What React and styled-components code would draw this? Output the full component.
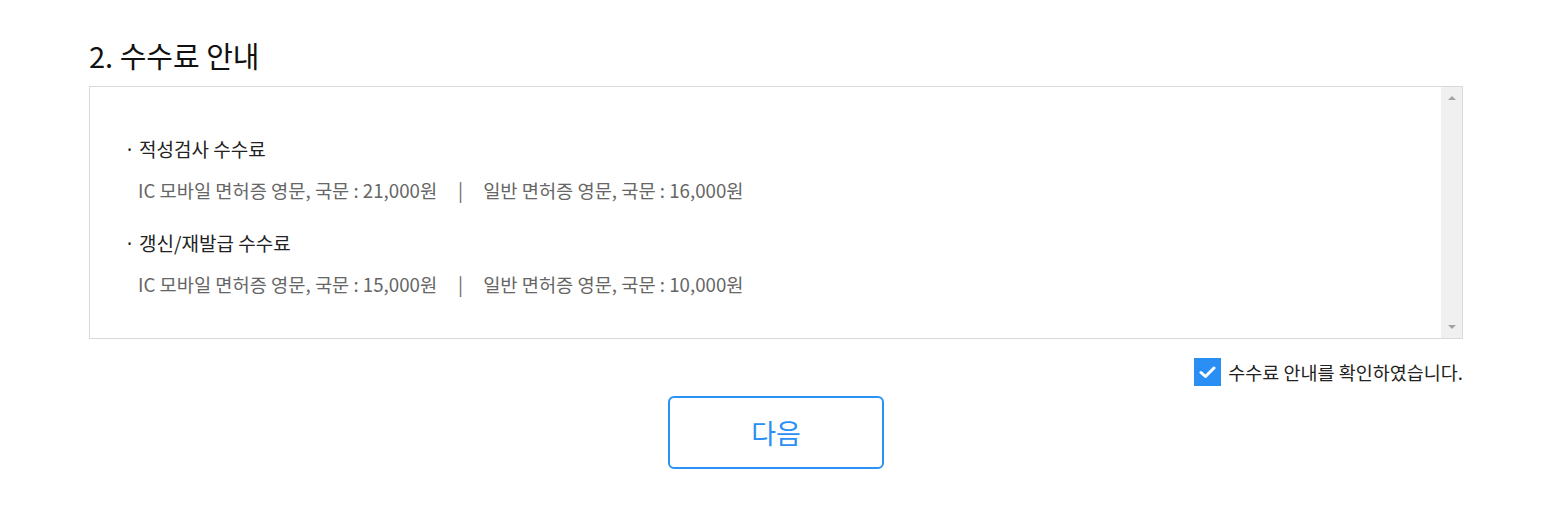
import React, { useState } from 'react';
import styled, { createGlobalStyle } from 'styled-components';

const GlobalStyle = createGlobalStyle`
  body {
    margin: 0;
    background: #fff;
    font-family: "Noto Sans CJK KR", "Noto Sans", sans-serif;
  }
`

const Page = styled.div`
  width: 1374px;
  margin-left: 89px;
  padding-top: 37px;
`

const Title = styled.h2`
  margin: 0 0 13px;
  font-size: 29px;
  line-height: 36px;
  font-weight: 400;
  color: #111;
`

const FeeBox = styled.div`
  display: flex;
  height: 251px;
  border: 1px solid #d9d9d9;
`

const FeeContent = styled.div`
  flex: 1;
  padding: 48px 0 0 37px;
`

const FeeTitle = styled.div`
  font-size: 19px;
  line-height: 28px;
  color: #222;
  margin-top: ${(p) => (p.$first ? '0' : '26px')};
`

const Bullet = styled.span`
  font-family: "Noto Sans", sans-serif;
  margin-right: 7px;
`

const FeeDetail = styled.div`
  margin-top: 13px;
  padding-left: 11px;
  font-size: 18.7px;
  line-height: 26px;
  color: #666;
`

const Divider = styled.span`
  margin: 0 20px 0 21px;
`

const ScrollTrack = styled.div`
  width: 21px;
  background: #f0f0f0;
  display: flex;
  flex-direction: column;
  justify-content: space-between;
  align-items: center;
  padding: 9px 0 9px;
`

const Arrow = styled.span`
  width: 0;
  height: 0;
  border-left: 4px solid transparent;
  border-right: 4px solid transparent;
  ${(p) =>
    p.$down
      ? 'border-top: 4px solid #a3a3a3;'
      : 'border-bottom: 4px solid #a3a3a3;'}
`

const AgreeRow = styled.label`
  display: flex;
  justify-content: flex-end;
  align-items: center;
  gap: 7px;
  margin-top: 19px;
  cursor: pointer;
  font-size: 18.5px;
  color: #222;
`

const CheckBox = styled.span`
  width: 27px;
  height: 28px;
  background: ${(p) => (p.$checked ? '#2a8ff5' : '#fff')};
  border: ${(p) => (p.$checked ? 'none' : '1px solid #ccc')};
  display: flex;
  align-items: center;
  justify-content: center;
`

const ButtonRow = styled.div`
  display: flex;
  justify-content: center;
  margin-top: 10px;
`

const NextButton = styled.button`
  width: 216px;
  height: 73px;
  border: 2px solid #2a92f5;
  border-radius: 6px;
  background: #fff;
  color: #2a8ff5;
  font-family: "Noto Sans CJK KR", "Noto Sans", sans-serif;
  font-size: 27px;
  cursor: pointer;
`

const fees = [
  { title: '적성검사 수수료', ic: '21,000원', normal: '16,000원' },
  { title: '갱신/재발급 수수료', ic: '15,000원', normal: '10,000원' },
];

const App = () => {
  const [checked, setChecked] = useState(true);

  return (
    <>
      <GlobalStyle />
      <Page>
        <Title>2. 수수료 안내</Title>
        <FeeBox>
          <FeeContent>
            {fees.map((fee, i) => (
              <div key={fee.title}>
                <FeeTitle $first={i === 0}>
                  <Bullet>·</Bullet>
                  {fee.title}
                </FeeTitle>
                <FeeDetail>
                  IC 모바일 면허증 영문, 국문 : {fee.ic}
                  <Divider>|</Divider>
                  일반 면허증 영문, 국문 : {fee.normal}
                </FeeDetail>
              </div>
            ))}
          </FeeContent>
          <ScrollTrack>
            <Arrow />
            <Arrow $down />
          </ScrollTrack>
        </FeeBox>
        <AgreeRow onClick={() => setChecked(!checked)}>
          <CheckBox $checked={checked}>
            {checked && (
              <svg width="17" height="13" viewBox="0 0 17 13">
                <path d="M2 6.5 L6.5 10.5 L15 2" fill="none" stroke="#fff" strokeWidth="3" strokeLinecap="round" strokeLinejoin="round" />
              </svg>
            )}
          </CheckBox>
          수수료 안내를 확인하였습니다.
        </AgreeRow>
        <ButtonRow>
          <NextButton>다음</NextButton>
        </ButtonRow>
      </Page>
    </>
  );
};

export default App;
